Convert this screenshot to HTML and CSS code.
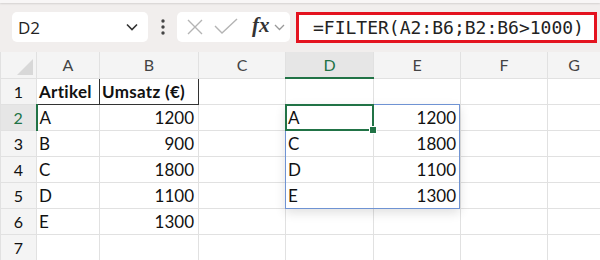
FILE: index.html
```html
<!DOCTYPE html>
<html lang="de">
<head>
  <meta charset="UTF-8">
  <title>FILTER</title>
  <link rel="stylesheet" href="styles.css">
</head>
<body>
  <div class="topline"></div>
  <div class="formulabar">
    <div class="namebox">
      <span>D2</span>
      <svg width="12" height="8" viewBox="0 0 12 8"><polyline points="1,1.5 6,6.5 11,1.5" fill="none" stroke="#333" stroke-width="1.6"/></svg>
    </div>
    <div class="dots">
      <svg width="4" height="16" viewBox="0 0 4 16"><circle cx="2" cy="2" r="1.7" fill="#444"/><circle cx="2" cy="8" r="1.7" fill="#444"/><circle cx="2" cy="14" r="1.7" fill="#444"/></svg>
    </div>
    <div class="fxbox">
      <svg class="ico" width="18" height="18" viewBox="0 0 18 18"><path d="M2 2 L16 16 M16 2 L2 16" stroke="#b4b4b4" stroke-width="1.4" fill="none"/></svg>
      <svg class="ico" width="24" height="18" viewBox="0 0 24 18"><polyline points="1,8 8,15 23,1" stroke="#b4b4b4" stroke-width="1.4" fill="none"/></svg>
      <span class="fx">fx</span>
      <svg width="11" height="7" viewBox="0 0 11 7"><polyline points="1,1 5.5,5.5 10,1" fill="none" stroke="#999" stroke-width="1.3"/></svg>
    </div>
    <div class="formula">=FILTER(A2:B6;B2:B6&gt;1000)</div>
  </div>

  <div class="sheet">
    <table class="grid">
      <colgroup>
        <col style="width:36px"><col style="width:63px"><col style="width:99px"><col style="width:87px">
        <col style="width:88px"><col style="width:87px"><col style="width:87px"><col style="width:53px">
      </colgroup>
      <tr class="colheads">
        <th class="corner"><span class="tri"></span></th>
        <th>A</th><th>B</th><th>C</th><th class="active">D</th><th>E</th><th>F</th><th>G</th>
      </tr>
      <tr>
        <th class="rowhead">1</th>
        <td class="hdr">Artikel</td><td class="hdr">Umsatz (€)</td><td></td><td></td><td></td><td></td><td></td>
      </tr>
      <tr>
        <th class="rowhead active">2</th>
        <td>A</td><td class="num">1200</td><td></td><td>A</td><td class="num">1200</td><td></td><td></td>
      </tr>
      <tr>
        <th class="rowhead">3</th>
        <td>B</td><td class="num">900</td><td></td><td>C</td><td class="num">1800</td><td></td><td></td>
      </tr>
      <tr>
        <th class="rowhead">4</th>
        <td>C</td><td class="num">1800</td><td></td><td>D</td><td class="num">1100</td><td></td><td></td>
      </tr>
      <tr>
        <th class="rowhead">5</th>
        <td>D</td><td class="num">1100</td><td></td><td>E</td><td class="num">1300</td><td></td><td></td>
      </tr>
      <tr>
        <th class="rowhead">6</th>
        <td>E</td><td class="num">1300</td><td></td><td></td><td></td><td></td><td></td>
      </tr>
      <tr>
        <th class="rowhead">7</th>
        <td></td><td></td><td></td><td></td><td></td><td></td><td></td>
      </tr>
    </table>
    <div class="spill"></div>
    <div class="cursor"><span class="handle"></span></div>
  </div>
</body>
</html>
```

FILE: styles.css
```css
body {
  margin: 0;
  width: 600px;
  height: 260px;
  overflow: hidden;
  background: #fff;
  font-family: Lato, "Noto Sans", sans-serif;
}
.topline {
  height: 3px;
  background: #f8f6f6;
  box-shadow: 0 1px 2px rgba(0,0,0,0.12);
  position: relative;
}
.formulabar {
  height: 49px;
  background: #f1eeed;
  display: flex;
  align-items: flex-start;
  padding: 9px 0 0 12px;
  box-sizing: border-box;
}
.namebox {
  width: 136px;
  height: 30px;
  background: #fff;
  border-radius: 5px;
  box-sizing: border-box;
  display: flex;
  align-items: center;
  justify-content: space-between;
  padding: 0 10px 0 6px;
  font-family: "Open Sans", sans-serif;
  font-size: 17px;
  color: #222;
}
.dots {
  width: 29px;
  height: 30px;
  display: flex;
  align-items: center;
  justify-content: center;
}
.fxbox {
  width: 113px;
  height: 30px;
  background: #fff;
  border-radius: 5px;
  display: flex;
  align-items: center;
  padding: 0 4px 0 9px;
  box-sizing: border-box;
}
.fxbox .ico {
  margin-right: 10px;
}
.fx {
  font-family: "Liberation Serif", serif;
  font-style: italic;
  font-weight: bold;
  font-size: 21px;
  color: #333;
  margin: -3px 4px 0 4px;
}
.formula {
  margin-left: 6px;
  width: 301px;
  height: 31px;
  border: 3px solid #e4131f;
  box-sizing: border-box;
  background: #fff;
  font-family: "DejaVu Sans Mono", monospace;
  font-size: 18px;
  color: #222;
  line-height: 25px;
  padding-left: 14px;
  white-space: nowrap;
}
.sheet {
  position: relative;
}
.grid {
  border-collapse: collapse;
  table-layout: fixed;
  width: 600px;
}
.grid th, .grid td {
  height: 25px;
  padding: 0;
  border: 1px solid #e1e1e1;
  font-size: 17px;
  color: #111;
  overflow: hidden;
  white-space: nowrap;
}
.grid tr:first-child th {
  border-top: none;
}
.grid td {
  padding-left: 2px;
}
.grid td.num {
  text-align: right;
  padding: 0 4px 0 0;
}
.colheads th {
  height: 25px;
  background: #f4f4f4;
  font-weight: normal;
  color: #444;
  font-size: 16px;
}
.colheads th.active {
  background: #e6e6e6;
  color: #217346;
  border-bottom: 2px solid #217346;
}
.corner {
  position: relative;
}
.tri {
  position: absolute;
  right: 3px;
  bottom: 3px;
  width: 0;
  height: 0;
  border-left: 16px solid transparent;
  border-bottom: 16px solid #d8d8d8;
}
.rowhead {
  background: #f4f4f4;
  font-weight: normal;
  color: #444;
  text-align: center;
}
.grid th.rowhead {
  font-size: 16px;
}
.rowhead.active {
  background: #e6e6e6;
  color: #217346;
  border-right: 2px solid #217346;
}
.grid td.hdr {
  font-weight: bold;
  border: 1px solid #333;
  letter-spacing: 0.3px;
}
.spill {
  position: absolute;
  left: 285px;
  top: 52px;
  width: 175px;
  height: 105px;
  border: 1px solid #6f93d3;
  box-sizing: border-box;
  box-shadow: 0 4px 10px rgba(0,0,0,0.12);
  pointer-events: none;
}
.cursor {
  position: absolute;
  left: 285px;
  top: 52px;
  width: 89px;
  height: 27px;
  border: 2px solid #217346;
  box-sizing: border-box;
}
.handle {
  position: absolute;
  right: -5px;
  bottom: -5px;
  width: 6px;
  height: 6px;
  background: #217346;
  border: 1px solid #fff;
}
```
